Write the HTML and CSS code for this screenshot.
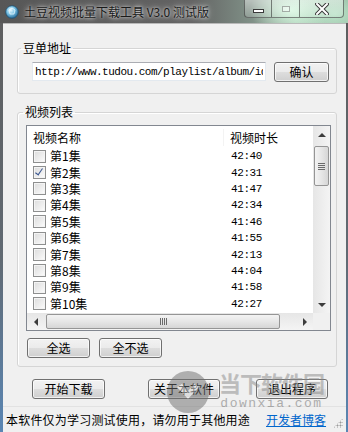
FILE: index.html
```html
<!DOCTYPE html>
<html lang="zh-CN">
<head>
  <meta charset="UTF-8">
  <title>土豆视频批量下载工具 V3.0 测试版</title>
  <link rel="stylesheet" href="styles.css">
</head>
<body>

<div class="window">
  <div class="titlebar">
    <svg class="app-icon" width="14" height="14" viewBox="0 0 14 14">
      <defs>
        <radialGradient id="gem" cx="40%" cy="35%" r="65%">
          <stop offset="0" stop-color="#e8f8ff"/>
          <stop offset="0.5" stop-color="#7cc4e6"/>
          <stop offset="1" stop-color="#2b6f9c"/>
        </radialGradient>
      </defs>
      <circle cx="7" cy="7" r="6.3" fill="url(#gem)" stroke="#1d4f70" stroke-width="0.8"/>
      <path d="M4 5 L7 3 L10 5 L9 9 L5 9 Z" fill="none" stroke="#ffffff" stroke-width="0.8" opacity="0.8"/>
    </svg>
    <span class="title">土豆视频批量下载工具 V3.0 测试版</span>
    <div class="caption-btns">
      <div class="cap cap-min"><span class="min-glyph"></span></div>
      <div class="cap cap-max"><span class="max-glyph"></span></div>
      <div class="cap cap-close">
        <svg width="14" height="12" viewBox="0 0 14 12">
          <path d="M2 1 L12 11 M12 1 L2 11" stroke="#3a3a3a" stroke-width="4" stroke-linecap="square"/>
          <path d="M2 1 L12 11 M12 1 L2 11" stroke="#ffffff" stroke-width="2" stroke-linecap="square"/>
        </svg>
      </div>
    </div>
  </div>

  <div class="client">
    <fieldset class="group group-url">
      <legend>豆单地址</legend>
      <div class="url-row">
        <input class="url-input" type="text" value="http://www.tudou.com/playlist/album/id6">
        <button class="btn btn-ok">确认</button>
      </div>
    </fieldset>

    <fieldset class="group group-list">
      <legend>视频列表</legend>
      <div class="listview">
        <div class="lv-body">
          <div class="lv-header">
            <span class="col-name">视频名称</span>
            <span class="col-time">视频时长</span>
          </div>
          <div class="lv-row"><span class="col-name"><span class="check"></span>第1集</span><span class="col-time">42:40</span></div>
          <div class="lv-row"><span class="col-name"><span class="check checked"></span>第2集</span><span class="col-time">42:31</span></div>
          <div class="lv-row"><span class="col-name"><span class="check"></span>第3集</span><span class="col-time">41:47</span></div>
          <div class="lv-row"><span class="col-name"><span class="check"></span>第4集</span><span class="col-time">42:34</span></div>
          <div class="lv-row"><span class="col-name"><span class="check"></span>第5集</span><span class="col-time">41:46</span></div>
          <div class="lv-row"><span class="col-name"><span class="check"></span>第6集</span><span class="col-time">41:55</span></div>
          <div class="lv-row"><span class="col-name"><span class="check"></span>第7集</span><span class="col-time">42:13</span></div>
          <div class="lv-row"><span class="col-name"><span class="check"></span>第8集</span><span class="col-time">44:04</span></div>
          <div class="lv-row"><span class="col-name"><span class="check"></span>第9集</span><span class="col-time">41:58</span></div>
          <div class="lv-row"><span class="col-name"><span class="check"></span>第10集</span><span class="col-time">42:27</span></div>
        </div>
        <div class="vscroll">
          <div class="sb-btn"><span class="arrow up"></span></div>
          <div class="vthumb"><span class="grip-h"></span></div>
          <div class="sb-track"></div>
          <div class="sb-btn"><span class="arrow down"></span></div>
        </div>
        <div class="hscroll">
          <div class="sb-btn"><span class="arrow left"></span></div>
          <div class="hthumb"><span class="grip-v"></span></div>
          <div class="sb-track"></div>
          <div class="sb-btn"><span class="arrow right"></span></div>
        </div>
        <div class="corner"></div>
      </div>
      <div class="list-btns">
        <button class="btn btn-sel">全选</button>
        <button class="btn btn-sel">全不选</button>
      </div>
    </fieldset>

    <div class="actions">
      <button class="btn btn-start">开始下载</button>
      <button class="btn btn-about">关于本软件</button>
      <button class="btn btn-exit">退出程序</button>
    </div>

    <div class="statusbar">
      <span class="status-text">本软件仅为学习测试使用，请勿用于其他用途</span>
      <a class="blog-link" href="#">开发者博客</a>
      <span class="grip"></span>
    </div>
  </div>

  <div class="watermark">
    <div class="wm-logo">
      <svg width="44" height="44" viewBox="0 0 44 44">
        <circle cx="22" cy="22" r="21" fill="#6e6e6e"/>
        <path d="M11 17 L22 29 L33 17 L28 14 L22 21 L16 14 Z" fill="#e8e8e8"/>
      </svg>
    </div>
    <div class="wm-text">
      <span class="wm-cn">当下软件园</span>
      <span class="wm-en">downxia.com</span>
    </div>
  </div>
</div>

</body>
</html>
```

FILE: styles.css
```css
body { margin: 0; background: #ffffff; font-family: "Noto Sans CJK SC", "Liberation Sans", sans-serif; }

.window {
  position: relative;
  width: 348px;
  height: 432px;
  display: flex;
  flex-direction: column;
  overflow: hidden;
  background: linear-gradient(to bottom, #5d5d5d 0%, #616a73 60%, #5a86b4 100%);
}

/* title bar */
.titlebar {
  height: 23px;
  display: flex;
  align-items: center;
  padding-left: 5px;
  background:
    radial-gradient(ellipse 40px 26px at 290px 10px, rgba(220,255,230,0.85), rgba(220,255,230,0) 100%),
    radial-gradient(ellipse 50px 30px at 335px 14px, rgba(200,245,215,0.7), rgba(200,245,215,0) 100%),
    linear-gradient(to right, #575757 0%, #636363 55%, #7f8f86 72%, #a9c6b2 85%, #8fb09a 100%);
}
.app-icon { flex: none; }
.title {
  margin-left: 5px;
  font-size: 12px;
  line-height: 16px;
  color: #1a1a1a;
  text-shadow: 0 0 6px rgba(255,255,255,0.85), 0 0 3px rgba(255,255,255,0.7);
}
.caption-btns {
  margin-left: auto;
  margin-right: 4px;
  align-self: flex-start;
  display: flex;
  height: 18px;
}
.cap {
  height: 17px;
  border: 1px solid rgba(40,40,40,0.55);
  border-top: none;
  background: linear-gradient(to bottom, rgba(255,255,255,0.45), rgba(255,255,255,0.15));
  display: flex;
  align-items: center;
  justify-content: center;
}
.cap-min { width: 26px; border-bottom-left-radius: 4px; border-right: none; }
.cap-max { width: 27px; border-right: none; }
.cap-close { width: 43px; border-bottom-right-radius: 4px; }
.min-glyph {
  width: 9px; height: 2px;
  margin-top: 5px;
  background: #ffffff;
  border: 1px solid #3a3a3a;
}
.max-glyph {
  width: 6px; height: 4px;
  border: 1px solid rgba(60,60,60,0.4);
  background: rgba(255,255,255,0.4);
}

/* client area */
.client {
  flex: 1;
  margin: 0 2px 0 3px;
  background: #f0f0f0;
  border-top: 1px solid #b9b9b9;
  display: flex;
  flex-direction: column;
  font-size: 12px;
  color: #000;
}

.group {
  margin: 0 9px 0 14px;
  border: 1px solid #d5d5d5;
  border-radius: 3px;
  min-width: 0;
  box-shadow: inset 1px 1px 0 #ffffff;
}
.group legend {
  padding: 0 2px;
  margin-left: -11px;
  font-size: 12px;
  line-height: 16px;
}
.group-url { margin-top: 16px; padding: 6px 7px 11px 14px; }
.group-list { margin-top: 10px; padding: 5px 5px 8px 8px; }
.group-list legend { margin-left: -3px; }

.url-row { display: flex; align-items: flex-start; gap: 8px; height: 20px; }
.url-input {
  box-sizing: border-box;
  width: 234px;
  height: 19px;
  margin: 0;
  padding: 0 2px;
  border: 1px solid #e3e9ef;
  border-top-color: #abadb3;
  background: #ffffff;
  font-family: "Liberation Mono", monospace;
  font-size: 11px;
  letter-spacing: -0.5px;
  color: #000;
  outline: none;
}

.btn {
  box-sizing: border-box;
  height: 20px;
  margin: 0;
  padding: 0;
  border: 1px solid #707070;
  border-radius: 3px;
  background: linear-gradient(to bottom, #f2f2f2 0%, #ebebeb 48%, #dddddd 52%, #cfcfcf 100%);
  box-shadow: inset 0 0 0 1px rgba(255,255,255,0.7);
  font-family: "Noto Sans CJK SC", sans-serif;
  font-size: 12px;
  line-height: 16px;
  color: #000;
}
.btn-ok { width: 55px; }
.btn-sel { width: 63px; }

/* list view */
.listview {
  box-sizing: border-box;
  width: 305px;
  height: 206px;
  border: 1px solid #828790;
  background: #ffffff;
  display: grid;
  grid-template-columns: 1fr 17px;
  grid-template-rows: 1fr 17px;
}
.lv-body { overflow: hidden; }
.lv-header {
  height: 22px;
  display: flex;
  align-items: center;
  background: #ffffff;
}
.lv-header .col-name { border-right: 1px solid #f3f3f3; }
.col-name {
  box-sizing: border-box;
  width: 197px;
  padding-left: 6px;
  display: flex;
  align-items: center;
  gap: 4px;
}
.col-time { padding-left: 6px; }
.lv-row {
  height: 16.4px;
  display: flex;
  align-items: center;
  line-height: 16px;
}
.lv-row .col-time {
  font-family: "Liberation Mono", monospace;
  font-size: 11px;
  letter-spacing: -0.4px;
  padding-left: 7px;
}
.check {
  position: relative;
  box-sizing: border-box;
  width: 13px;
  height: 13px;
  border: 1px solid #8e8f8f;
  background: linear-gradient(135deg, #dcdcdc 0%, #f2f2f2 70%, #ffffff 100%);
  box-shadow: inset 0 0 0 1px #f4f4f4;
}
.check.checked::after {
  content: "";
  position: absolute;
  left: 3px;
  top: 0px;
  width: 3px;
  height: 7px;
  border: solid #3a5690;
  border-width: 0 1.5px 1.5px 0;
  transform: rotate(35deg);
}

/* scrollbars */
.vscroll {
  display: flex;
  flex-direction: column;
  background: linear-gradient(to right, #e6e6e6, #f4f4f4);
}
.hscroll {
  display: flex;
  background: linear-gradient(to bottom, #e6e6e6, #f4f4f4);
}
.sb-btn {
  flex: none;
  width: 17px;
  height: 17px;
  display: flex;
  align-items: center;
  justify-content: center;
}
.sb-track { flex: 1; }
.vthumb {
  box-sizing: border-box;
  height: 40px;
  margin: 3px 1px 0;
  border: 1px solid #959595;
  border-radius: 2px;
  background: linear-gradient(to right, #f3f3f3, #e6e6e6 50%, #d6d6d6);
  display: flex;
  align-items: center;
  justify-content: center;
}
.hthumb {
  box-sizing: border-box;
  width: 234px;
  margin: 1px 0 1px 2px;
  border: 1px solid #959595;
  border-radius: 2px;
  background: linear-gradient(to bottom, #f3f3f3, #e6e6e6 50%, #d6d6d6);
  display: flex;
  align-items: center;
  justify-content: center;
}
.grip-h {
  width: 7px;
  height: 7px;
  background: repeating-linear-gradient(to bottom, #6a6a6a 0, #6a6a6a 1px, transparent 1px, transparent 2px);
}
.grip-v {
  width: 7px;
  height: 7px;
  background: repeating-linear-gradient(to right, #6a6a6a 0, #6a6a6a 1px, transparent 1px, transparent 2px);
}
.arrow { width: 0; height: 0; border: 4px solid transparent; }
.arrow.up { border-bottom-color: #3c3c3c; border-top-width: 0; }
.arrow.down { border-top-color: #3c3c3c; border-bottom-width: 0; }
.arrow.left { border-right-color: #3c3c3c; border-left-width: 0; }
.arrow.right { border-left-color: #3c3c3c; border-right-width: 0; }
.corner { background: #f0f0f0; }

.list-btns { display: flex; gap: 9px; margin: 7px 0 0 1px; }

/* bottom actions */
.actions {
  display: flex;
  margin-top: 12px;
  padding-left: 29px;
}
.btn-start { width: 73px; }
.btn-about { width: 72px; margin-left: 43px; }
.btn-exit { width: 72px; margin-left: 36px; }

.statusbar {
  position: relative;
  margin-top: 7px;
  height: 24px;
  display: flex;
  align-items: center;
  padding-left: 3px;
  border-top: 1px solid #e2e2e2;
}
.status-text { font-size: 12px; color: #000; letter-spacing: 0.2px; }
.blog-link {
  margin-left: 16px;
  color: #0066cc;
  text-decoration: underline;
  font-size: 12px;
}
.grip {
  position: absolute;
  right: 3px;
  bottom: 3px;
  width: 10px;
  height: 10px;
  background:
    radial-gradient(circle, #9a9a9a 0.8px, transparent 1.2px) 0 0 / 3px 3px;
  clip-path: polygon(100% 0, 100% 100%, 0 100%);
}

/* watermark */
.watermark {
  position: absolute;
  left: 166px;
  top: 370px;
  display: flex;
  align-items: flex-start;
  gap: 9px;
  opacity: 0.5;
  pointer-events: none;
}
.wm-text { display: flex; flex-direction: column; align-items: center; }
.wm-cn {
  font-size: 22px;
  line-height: 24px;
  font-weight: bold;
  color: #8a8a8a;
  letter-spacing: -1px;
}
.wm-en {
  font-family: "Liberation Mono", monospace;
  font-size: 13px;
  line-height: 11px;
  color: #6a6a6a;
  letter-spacing: 1.5px;
  margin-top: 4px;
}
```
